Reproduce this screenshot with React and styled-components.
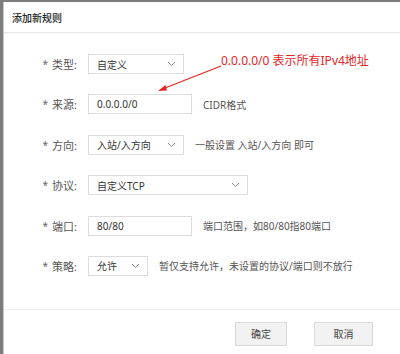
import styled, { createGlobalStyle } from 'styled-components';

const GlobalStyle = createGlobalStyle`
  html, body {
    margin: 0;
    padding: 0;
    background: #7d7d7d;
  }
  * {
    box-sizing: border-box;
  }
`;

const StyledPage = styled.div`
  width: 400px;
  height: 354px;
  padding: 2px 0 0 3px;
  overflow: hidden;
  background: #7d7d7d;
  font-family: 'Noto Sans', 'Noto Sans CJK SC', sans-serif;
  display: flex;
`;

const StyledDialog = styled.div`
  position: relative;
  flex: 1;
  display: flex;
  flex-direction: column;
  background: #ffffff;
  border-left: 1px solid #c8c8c8;
`;

const StyledHeader = styled.div`
  height: 31px;
  display: flex;
  align-items: center;
  padding-left: 8px;
  border-bottom: 1px solid #e9e9e9;
  box-shadow: 0 1px 1px rgba(0, 0, 0, 0.03);
`;

const StyledTitle = styled.h3`
  margin: 0;
  font-size: 10px;
  font-weight: 500;
  color: #222;
`;

const StyledForm = styled.div`
  display: flex;
  flex-direction: column;
  gap: 20.4px;
  padding: 21px 0 33px;
  border-bottom: 1px solid #efefef;
`;

const StyledRow = styled.div`
  display: flex;
  align-items: center;
  height: 20px;
`;

const StyledLabel = styled.label`
  width: 73px;
  text-align: right;
  font-size: 11px;
  color: #555;
  margin-right: 11px;
  white-space: nowrap;

  &::before {
    content: '*';
    font-size: 10px;
    color: #666;
    margin-right: 4px;
    position: relative;
    top: -1px;
  }
`;

const StyledField = styled.div`
  width: ${(props) => props.width}px;
  height: 20px;
  display: flex;
  align-items: center;
  justify-content: space-between;
  padding: 0 7px 0 8px;
  border: 1px solid #dcdcdc;
  background: #fff;
  font-size: 10px;
  color: #333;
`;

const StyledHint = styled.span`
  margin-left: 11px;
  font-size: 10px;
  color: #555;
  white-space: nowrap;
`;

const StyledFooter = styled.div`
  display: flex;
  justify-content: flex-end;
  gap: 27px;
  padding: 12px 27px 0 0;
`;

const StyledButton = styled.button`
  width: ${(props) => props.width}px;
  height: 24px;
  border: 1px solid #dadada;
  background: #f2f2f2;
  font-family: inherit;
  font-size: 10px;
  color: #444;
  padding: 0;
  cursor: pointer;
`;

const StyledNote = styled.div`
  position: absolute;
  left: 0;
  top: 0;
  pointer-events: none;
`;

const StyledNoteText = styled.span`
  position: absolute;
  left: 217px;
  top: 49px;
  font-size: 12px;
  color: #e3261f;
  white-space: nowrap;
`;

function Chevron() {
  return (
    <svg width="9" height="6" viewBox="0 0 9 6">
      <path d="M1 1 L4.5 4.5 L8 1" fill="none" stroke="#8a8a8a" strokeWidth="1" />
    </svg>
  );
}

const rows = [
  { label: '类型', value: '自定义', width: 96, select: true },
  { label: '来源', value: '0.0.0.0/0', width: 104, hint: 'CIDR格式' },
  { label: '方向', value: '入站/入方向', width: 96, select: true, hint: '一般设置 入站/入方向 即可' },
  { label: '协议', value: '自定义TCP', width: 160, select: true },
  { label: '端口', value: '80/80', width: 104, hint: '端口范围，如80/80指80端口' },
  { label: '策略', value: '允许', width: 60, select: true, hint: '暂仅支持允许，未设置的协议/端口则不放行' },
];

export default function App() {
  return (
    <StyledPage>
      <GlobalStyle />
      <StyledDialog>
        <StyledHeader>
          <StyledTitle>添加新规则</StyledTitle>
        </StyledHeader>
        <StyledForm>
          {rows.map((row) => (
            <StyledRow key={row.label}>
              <StyledLabel>{row.label}:</StyledLabel>
              <StyledField width={row.width}>
                <span>{row.value}</span>
                {row.select && <Chevron />}
              </StyledField>
              {row.hint && <StyledHint>{row.hint}</StyledHint>}
            </StyledRow>
          ))}
        </StyledForm>
        <StyledFooter>
          <StyledButton width={52}>确定</StyledButton>
          <StyledButton width={59}>取消</StyledButton>
        </StyledFooter>
        <StyledNote>
          <svg width="397" height="120" viewBox="0 0 397 120">
            <line x1="217" y1="64" x2="161" y2="86" stroke="#e3261f" strokeWidth="1.2" />
            <path d="M154 89 L161.5 83 L163 88.5 Z" fill="#e3261f" />
          </svg>
          <StyledNoteText>0.0.0.0/0 表示所有IPv4地址</StyledNoteText>
        </StyledNote>
      </StyledDialog>
    </StyledPage>
  );
}
